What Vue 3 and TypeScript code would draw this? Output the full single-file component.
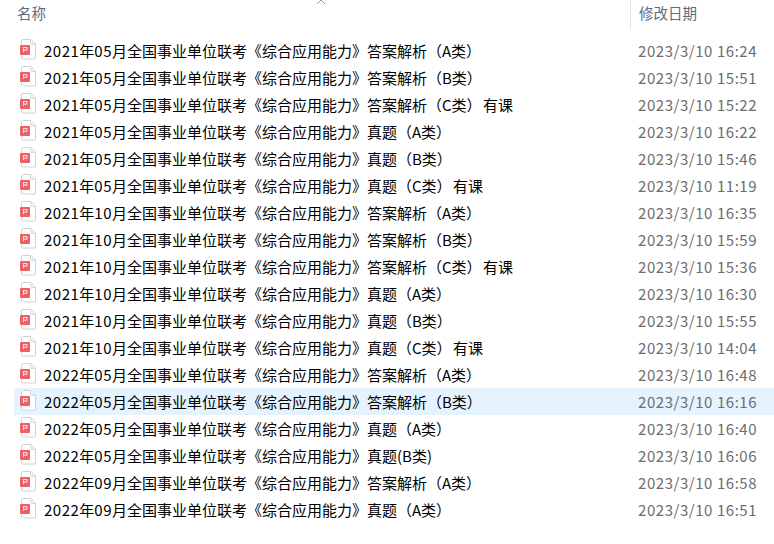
<script setup lang="ts">
interface Row { year: string; month: string; tail: string; tag: string; date: string; selected?: boolean }
const base = '全国事业单位联考《综合应用能力》'
const make = (year: string, month: string, tail: string, date: string, tag = '', selected = false): Row => ({
  year, month, tail: base + tail, tag, date, selected
})
const rows: Row[] = [
  make('2021', '05', '答案解析（A类）', '2023/3/10 16:24'),
  make('2021', '05', '答案解析（B类）', '2023/3/10 15:51'),
  make('2021', '05', '答案解析（C类）', '2023/3/10 15:22', '有课'),
  make('2021', '05', '真题（A类）', '2023/3/10 16:22'),
  make('2021', '05', '真题（B类）', '2023/3/10 15:46'),
  make('2021', '05', '真题（C类）', '2023/3/10 11:19', '有课'),
  make('2021', '10', '答案解析（A类）', '2023/3/10 16:35'),
  make('2021', '10', '答案解析（B类）', '2023/3/10 15:59'),
  make('2021', '10', '答案解析（C类）', '2023/3/10 15:36', '有课'),
  make('2021', '10', '真题（A类）', '2023/3/10 16:30'),
  make('2021', '10', '真题（B类）', '2023/3/10 15:55'),
  make('2021', '10', '真题（C类）', '2023/3/10 14:04', '有课'),
  make('2022', '05', '答案解析（A类）', '2023/3/10 16:48'),
  make('2022', '05', '答案解析（B类）', '2023/3/10 16:16', '', true),
  make('2022', '05', '真题（A类）', '2023/3/10 16:40'),
  make('2022', '05', '真题(B类)', '2023/3/10 16:06'),
  make('2022', '09', '答案解析（A类）', '2023/3/10 16:58'),
  make('2022', '09', '真题（A类）', '2023/3/10 16:51')
]
</script>

<template>
  <div class="page">
    <header class="head">
      <div class="head-name">
        名称
        <svg class="sort" width="10" height="4" viewBox="0 0 10 4"><path d="M1 4 5 0 9 4" fill="none" stroke="#9a9a9a" stroke-width="1" /></svg>
      </div>
      <div class="head-date">修改日期</div>
    </header>
    <ul class="list">
      <li v-for="row in rows" :key="row.year + row.month + row.tail" class="row" :class="{ selected: row.selected }">
        <svg class="icon" width="18" height="23" viewBox="0 0 18 23">
          <path d="M2.5 1.5a1 1 0 0 1 1-1h8.5l4.5 4.5v14a1 1 0 0 1-1 1h-12a1 1 0 0 1-1-1z" fill="#fff" stroke="#d2d2d2" />
          <path d="M11.5 .5v4a1 1 0 0 0 1 1h4" fill="#f1f1f1" stroke="#dadada" />
          <rect x="1" y="6" width="10" height="10" rx="1" fill="#ee5f67" />
          <path d="M4.5 13V8.5h3.4v2.6H5" fill="none" stroke="#fbd5d7" stroke-width="1.1" />
        </svg>
        <span class="name"><span class="num">{{ row.year }}</span>年<span class="num">{{ row.month }}</span>月{{ row.tail }}<span v-if="row.tag" class="tag">{{ row.tag }}</span></span>
        <span class="date">{{ row.date }}</span>
      </li>
    </ul>
  </div>
</template>

<style>
html, body { margin: 0; background: #fff; }
</style>

<style scoped>
.page {
  width: 774px;
  height: 544px;
  overflow: hidden;
  font-family: "Noto Sans CJK SC", "Liberation Sans", sans-serif;
  font-size: 15px;
  background: #fff;
}
.head {
  display: grid;
  grid-template-columns: 630px 1fr;
  height: 29px;
  color: #5b6b85;
  font-size: 14.5px;
}
.head-name {
  position: relative;
  padding-left: 17px;
  line-height: 26px;
}
.sort {
  position: absolute;
  left: 316px;
  top: 0;
}
.head-date {
  border-left: 1px solid #e4e4e4;
  padding-left: 8px;
  line-height: 26px;
}
.list {
  list-style: none;
  margin: 8px 0 0;
  padding: 0 0 0 14px;
}
.row {
  display: grid;
  grid-template-columns: 30px 594px 1fr;
  align-items: center;
  height: 27px;
}
.selected { background: #e5f3ff; }
.icon { margin-left: 5px; }
.name { color: #000; white-space: nowrap; line-height: 27px; }
.num { letter-spacing: 0.5px; }
.tag { margin-left: 1.5px; }
.date { color: #6d6d6d; white-space: nowrap; line-height: 27px; letter-spacing: 0.55px; }
</style>
